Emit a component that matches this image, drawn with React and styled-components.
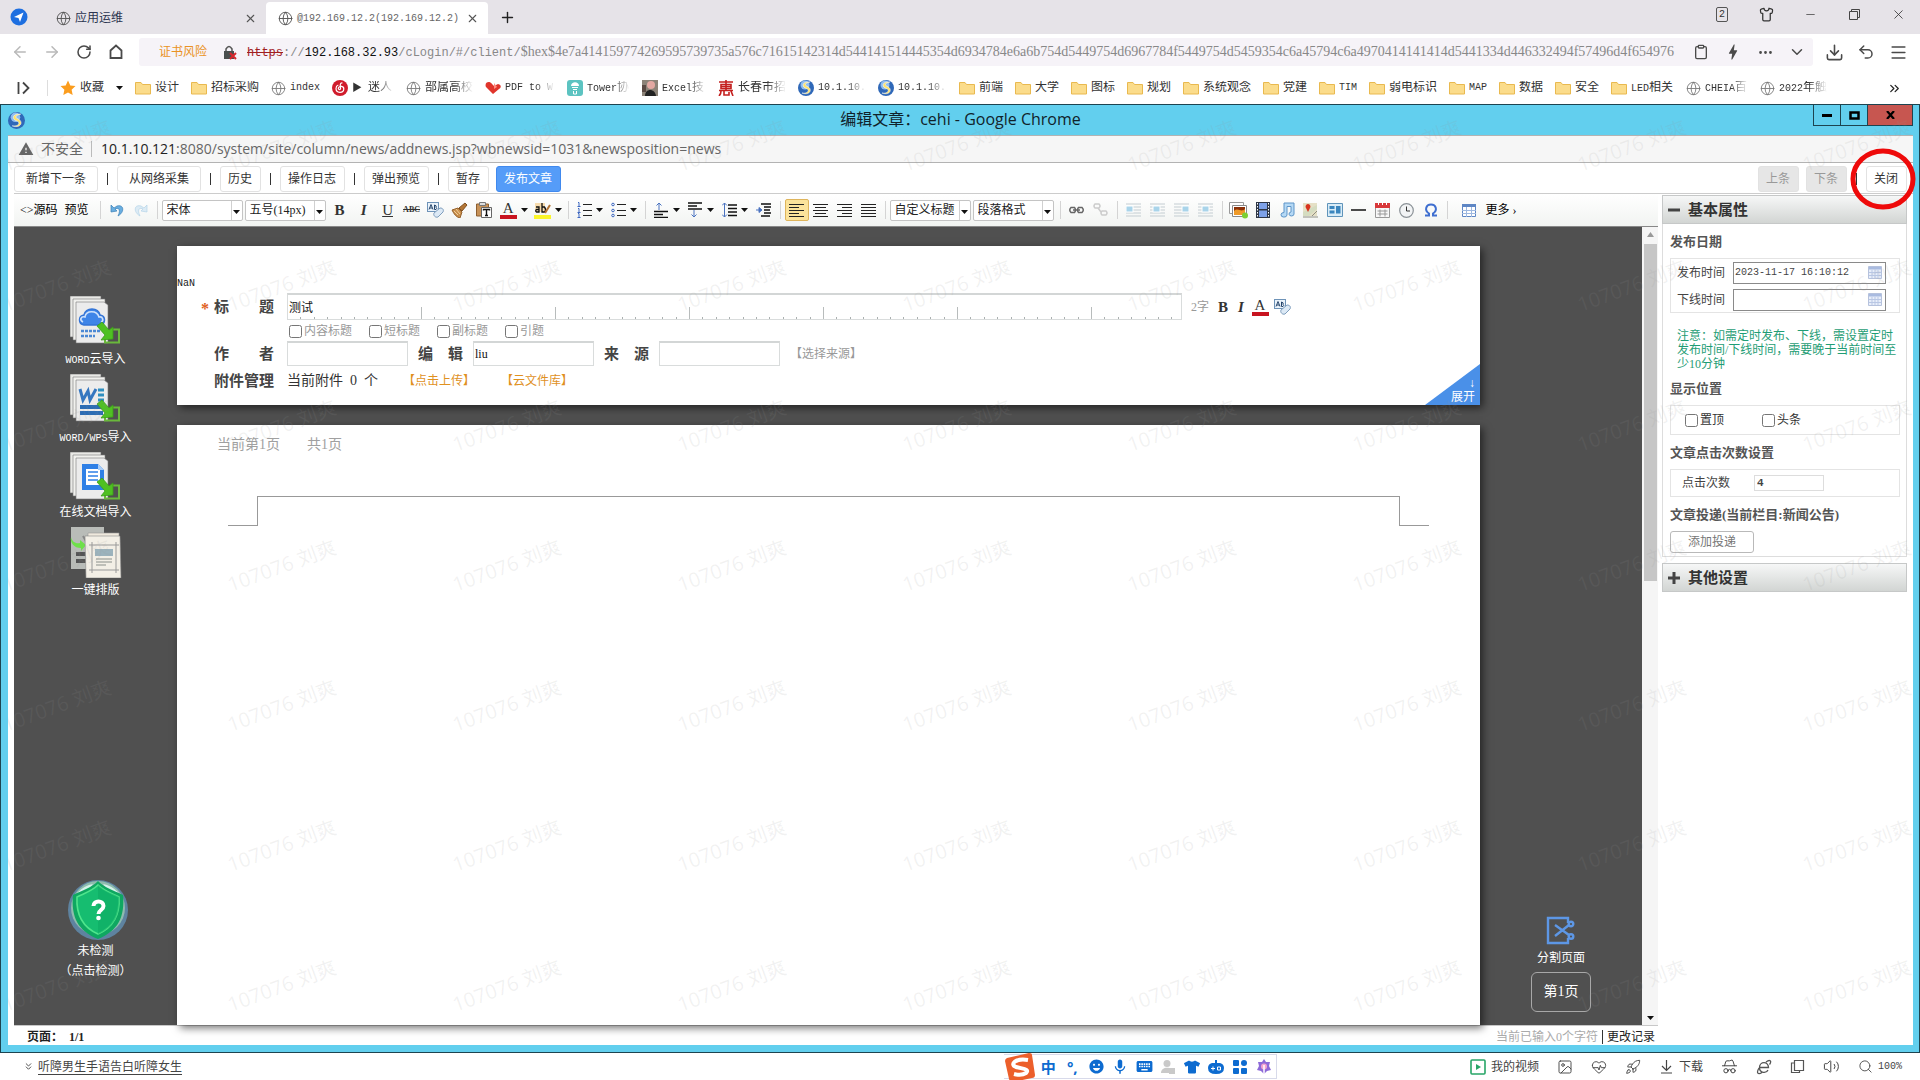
import React, { useState } from 'react';
import styled, { createGlobalStyle, css } from 'styled-components';
import {
  Globe, X, Plus, ArrowLeft, ArrowRight, RotateCw, Shirt, Minus, Copy, Clipboard,
  Ellipsis, ChevronDown, ChevronsDown, ChevronsRight, Undo2, Menu, Download, Image,
  Rocket, HeartPulse, Volume2, Search, HatGlasses,
} from 'lucide-react';
import { MdMic, MdKeyboard, MdBolt, MdWarning, MdEmojiEmotions } from 'react-icons/md';
import { FaTshirt } from 'react-icons/fa';

const song = '"Liberation Serif", "Noto Sans CJK SC", serif';
const mono = '"Liberation Mono", "Noto Sans CJK SC", monospace';
const ui = '"Open Sans", "Noto Sans CJK SC", sans-serif';

const GlobalStyle = createGlobalStyle`
  * {
    box-sizing: border-box;
  }
  body {
    margin: 0;
    background: #ffffff;
    color: #222222;
    font-family: ${song};
    font-size: 12px;
    line-height: 14px;
  }
  button, input, select {
    font-family: inherit;
    font-size: inherit;
    color: inherit;
    line-height: inherit;
    margin: 0;
    padding: 0;
  }
  button {
    background: none;
    border: none;
    cursor: pointer;
    white-space: nowrap;
  }
  a {
    color: inherit;
    text-decoration: none;
  }
  svg {
    display: block;
    flex: none;
  }
`;

const Half = styled.span`
  font-family: ${mono};
  font-size: 10px;
`;

const Page = styled.div`
  display: flex;
  flex-direction: column;
  min-height: 100vh;
  overflow: hidden;
`;

/* ---------- 浏览器外壳 ---------- */

const TabStrip = styled.div`
  display: flex;
  align-items: flex-end;
  height: 34px;
  background: #e6e3e8;
`;

const Compass = styled.div`
  width: 47px;
  padding: 0 0 8px 10px;
`;

const Tab = styled.div`
  display: flex;
  align-items: center;
  gap: 4px;
  width: ${({ $active }) => ($active ? 222 : 219)}px;
  height: 32px;
  padding: 0 9px 0 ${({ $active }) => ($active ? 12 : 9)}px;
  border-radius: 4px 4px 0 0;
  background: ${({ $active }) => ($active ? '#ffffff' : 'transparent')};
  color: #555555;
  span {
    flex: 1;
    white-space: nowrap;
    color: ${({ $active }) => ($active ? '#666666' : '#2c3550')};
  }
`;

const NewTab = styled.button`
  padding: 0 0 8px 11px;
`;

const WinTools = styled.div`
  display: flex;
  margin-left: auto;
  align-self: flex-start;
  height: 28px;
  button {
    display: flex;
    align-items: center;
    justify-content: center;
    width: 44px;
    color: #333333;
  }
`;

const TabCount = styled.span`
  width: 12px;
  height: 15px;
  border: 1px solid #555555;
  border-radius: 2px;
  font-family: ${mono};
  font-size: 10px;
`;

const AddressRow = styled.div`
  display: flex;
  align-items: center;
  height: 36px;
  padding: 0 6px 0 4px;
`;

const NavButton = styled.button`
  display: flex;
  align-items: center;
  justify-content: center;
  width: 32px;
  height: 28px;
  color: ${({ disabled }) => (disabled ? '#b9b9b9' : '#4a4a4a')};
`;

const Omnibox = styled.div`
  display: flex;
  align-items: center;
  flex: 1;
  min-width: 0;
  height: 28px;
  margin: 0 5px 0 7px;
  padding-left: 20px;
  border-radius: 3px;
  background: #f6f3f8;
  color: #888888;
`;

const CertRisk = styled.span`
  width: 64px;
  color: #ea9224;
`;

const Url = styled.div`
  flex: 1;
  min-width: 0;
  overflow: hidden;
  margin-left: 9px;
  font-family: ${mono};
  font-size: 12px;
  line-height: 18px;
  white-space: nowrap;
  s {
    color: #a1201f;
  }
  b {
    font-weight: 400;
    color: #111111;
  }
`;

const UrlHash = styled.span`
  font-family: ${song};
  font-size: 14px;
`;

const Bookmarks = styled.nav`
  display: flex;
  align-items: center;
  gap: 12px;
  height: 34px;
  padding: 2px 18px 0 17px;
`;

const Bookmark = styled.a`
  display: flex;
  align-items: center;
  gap: 4px;
  color: #333333;
  span {
    width: ${({ $w }) => $w}px;
    overflow: hidden;
    white-space: nowrap;
    font-family: ${mono};
    font-size: 10px;
    ${({ $fade }) => $fade && css`
      mask-image: linear-gradient(90deg, #000 60%, transparent);
    `}
  }
  em {
    font-style: normal;
    font-size: 12px;
  }
`;

const BarLine = styled.i`
  width: 1px;
  height: 16px;
  margin: 0 0 0 5px;
  background: #dddddd;
`;

const More = styled.button`
  margin-left: auto;
`;

/* ---------- 远程窗口 ---------- */

const RemoteWindow = styled.section`
  position: relative;
  display: flex;
  flex-direction: column;
  flex: 1;
  border: 1px solid #1d4450;
  background: #62cfee;
  padding: 0 6px 7px 7px;
`;

const TitleBar = styled.header`
  display: grid;
  grid-template-columns: 1fr auto 1fr;
  height: 30px;
  font-family: ${ui};
  font-size: 16px;
  line-height: 28px;
  color: #10222a;
  svg {
    align-self: center;
  }
`;

const WindowButtons = styled.div`
  display: flex;
  justify-self: end;
  height: 21px;
`;

const WindowButton = styled.button`
  display: flex;
  align-items: center;
  justify-content: center;
  width: ${({ $close }) => ($close ? 46 : 28)}px;
  border: 1px solid #1d4450;
  border-top: none;
  margin-left: -1px;
  background: ${({ $close }) => ($close ? '#c75650' : 'transparent')};
`;

const RemoteAddress = styled.div`
  display: flex;
  align-items: center;
  height: 28px;
  padding-left: 10px;
  border-bottom: 1px solid #b3b3b3;
  border-top: 1px solid #b3b3b3;
  background: #f6f6f6;
  font-family: ${ui};
  font-size: 14px;
  line-height: 20px;
  color: #666666;
  span {
    margin-left: 7px;
    padding-right: 8px;
    border-right: 1px solid #bbbbbb;
    line-height: 16px;
  }
  p {
    margin: 0 0 0 9px;
  }
  b {
    font-weight: 400;
    color: #222222;
  }
`;

const Body = styled.div`
  display: flex;
  flex-direction: column;
  flex: 1;
  padding-left: 6px;
  background: #ffffff;
`;

const ActionBar = styled.div`
  display: flex;
  align-items: center;
  gap: 9px;
  height: 31px;
  padding: 2px 6px 0 0;
  border-bottom: 1px solid #cccccc;
`;

const Action = styled.button`
  position: relative;
  height: 26px;
  padding: ${({ $wide }) => ($wide ? '0 11px' : '0 8px 0 7px')};
  margin-left: ${({ $near }) => ($near ? -2 : 0)}px;
  border: 1px solid #e2e2e2;
  border-radius: 3px;
  color: #333333;
  background: #ffffff;
  ${({ $primary }) => $primary && css`
    background: #559cf8;
    border-color: #4089ee;
    color: #ffffff;
  `}
  &:disabled {
    background: #e6e6e6;
    color: #999999;
  }
`;

const Sep = styled.i`
  width: 1px;
  height: 12px;
  background: #333333;
`;

const Spacer = styled.div`
  flex: 1;
`;

const RedRing = styled.svg`
  position: absolute;
  left: -17px;
  top: -19px;
  z-index: 3;
  pointer-events: none;
`;

const Workspace = styled.div`
  display: flex;
  flex: 1;
`;

const Main = styled.div`
  display: flex;
  flex-direction: column;
  flex: 1;
  min-width: 0;
`;

const Toolbar = styled.div`
  display: flex;
  align-items: center;
  height: 32px;
  padding-left: 6px;
  background: linear-gradient(#ffffff, #f2f4f2);
  color: #000000;
`;

const Tool = styled.button`
  display: flex;
  align-items: center;
  justify-content: ${({ $menu }) => ($menu ? 'flex-start' : 'center')};
  gap: 4px;
  width: ${({ $menu, $w }) => $w || ($menu ? 34 : 24)}px;
  height: 22px;
  padding-left: ${({ $menu }) => ($menu ? 4 : 0)}px;
  ${({ $on }) => $on && css`
    background: #fbe39b;
    border: 1px solid #dfb55c;
    border-radius: 2px;
  `}
`;

const TextTool = styled.button`
  margin-right: 7px;
`;

const ToolLine = styled.i`
  width: 1px;
  height: 18px;
  margin: 0 4px;
  background: #d4d4d4;
`;

const Glyph = styled.span`
  font-family: "Liberation Serif", serif;
  font-size: 15px;
  line-height: 16px;
  color: #333333;
  font-weight: ${({ $bold }) => ($bold ? 700 : 400)};
  font-style: ${({ $italic }) => ($italic ? 'italic' : 'normal')};
  text-decoration: ${({ $line }) => $line || 'none'};
  border-bottom: ${({ $bar }) => ($bar ? `4px solid ${$bar}` : 'none')};
  ${({ $small }) => $small && css`
    font-size: 8px;
  `}
  ${({ $bar }) => $bar && css`
    width: 17px;
    line-height: 14px;
    text-align: center;
  `}
`;

const Picker = styled.label`
  position: relative;
  width: 81px;
  margin-right: 2px;
  select {
    appearance: none;
    width: 100%;
    height: 21px;
    padding: 0 13px 0 4px;
    border: 1px solid #c4c4c4;
    border-radius: 2px;
    background: #ffffff;
    color: #222222;
  }
  svg {
    position: absolute;
    right: 3px;
    top: 10px;
  }
  &::after {
    content: '';
    position: absolute;
    right: 11px;
    top: 1px;
    bottom: 1px;
    width: 1px;
    background: #d0d0d0;
  }
`;

/* ---------- 编辑区 ---------- */

const EditorArea = styled.div`
  display: flex;
  flex: 1;
  background: #505050;
  border-top: 1px solid #888888;
`;

const Side = styled.aside`
  display: flex;
  flex-direction: column;
  align-items: center;
  width: ${({ $right }) => ($right ? 162 : 163)}px;
  padding: 69px 0 ${({ $right }) => ($right ? 13 : 44)}px;
  color: #ffffff;
`;

const SideItem = styled.button`
  display: flex;
  flex-direction: column;
  align-items: center;
  height: ${({ $short }) => ($short ? 75 : 78)}px;
  color: #ffffff;
  line-height: ${({ $short }) => ($short ? 24 : 30)}px;
`;

const Check = styled.button`
  display: flex;
  flex-direction: column;
  align-items: center;
  margin-top: auto;
  color: #ffffff;
  line-height: 20px;
`;

const Split = styled.button`
  display: flex;
  flex-direction: column;
  align-items: center;
  margin-top: auto;
  line-height: 27px;
  color: #ffffff;
`;

const PageChip = styled.button`
  width: 60px;
  height: 40px;
  border: 1px solid #a8a8a8;
  border-radius: 6px;
  font-size: 14px;
  color: #ffffff;
`;

const Papers = styled.div`
  display: flex;
  flex-direction: column;
  gap: 20px;
  flex: 1;
  padding-top: 19px;
`;

const Paper = styled.div`
  position: relative;
  flex: ${({ $fill }) => ($fill ? 1 : 'none')};
  background: #ffffff;
  box-shadow: 3px 3px 8px rgba(0, 0, 0, .55);
`;

const NanLine = styled.div`
  padding: 31px 0 1px;
  font-family: ${mono};
  font-size: 10px;
`;

const FormRow = styled.div`
  display: flex;
  align-items: center;
  height: ${({ $h }) => $h}px;
  padding-left: ${({ $indent }) => $indent || 37}px;
`;

const Star = styled.span`
  width: 13px;
  margin-left: -13px;
  color: #e0601c;
  font-size: 16px;
  line-height: 10px;
  font-weight: 700;
  padding-top: 5px;
`;

const FieldLabel = styled.label`
  margin-right: ${({ $tight }) => ($tight ? 10 : 13)}px;
  font-size: 15px;
  font-weight: 700;
  line-height: 20px;
  color: #444444;
  white-space: pre;
`;

const TitleField = styled.div`
  position: relative;
  flex: 1;
  svg {
    position: absolute;
    left: 0;
    bottom: 1px;
  }
`;

const TextField = styled.input`
  width: ${({ $full }) => ($full ? '100%' : '121px')};
  height: ${({ $full }) => ($full ? 27 : 25)}px;
  padding: 0 1px;
  border: 1px solid #d9dcdc;
  border-top: 2px solid #d3d6d6;
  margin-right: ${({ $full }) => ($full ? 0 : 10)}px;
  display: block;
  color: #111111;
`;

const TitleTools = styled.div`
  display: flex;
  align-items: center;
  flex: 0 0 298px;
  padding-left: 9px;
  color: #999999;
  i {
    width: 4px;
  }
`;

const Tick = styled.label`
  display: flex;
  align-items: center;
  gap: 2px;
  margin-right: ${({ $gap }) => $gap || 17}px;
  color: ${({ $muted }) => ($muted ? '#999999' : '#333333')};
  input {
    width: 13px;
    height: 13px;
  }
`;

const Attach = styled.span`
  width: 116px;
  font-size: 14px;
  line-height: 20px;
  color: #333333;
`;

const Link = styled.a`
  width: 98px;
  color: ${({ $muted }) => ($muted ? '#999999' : '#e0911f')};
`;

const Fold = styled.button`
  position: absolute;
  right: 0;
  bottom: 0;
  width: 55px;
  height: 41px;
  padding: 11px 5px 0 0;
  background: #4a90e8;
  clip-path: polygon(100% 0, 100% 100%, 0 100%);
  color: #ffffff;
  text-align: right;
  line-height: 14px;
  span {
    display: block;
  }
`;

const PageInfo = styled.div`
  display: flex;
  gap: 27px;
  height: 71px;
  padding: 10px 40px;
  font-size: 14px;
  line-height: 20px;
  color: #a0a0a0;
`;

const Margins = styled.div`
  display: grid;
  grid-template-columns: 30px 1fr 30px;
  height: 30px;
  padding: 0 51px;
  i {
    border: 0 solid #999999;
  }
  i:nth-child(1) {
    border-width: 0 1px 1px 0;
  }
  i:nth-child(2) {
    border-width: 1px 0 0;
  }
  i:nth-child(3) {
    border-width: 0 0 1px 1px;
  }
`;

const ScrollBar = styled.div`
  display: flex;
  flex-direction: column;
  align-items: center;
  width: 16px;
  padding: 5px 0;
  background: #f5f5f5;
`;

const Thumb = styled.i`
  width: 13px;
  height: 337px;
  margin: 7px 0 auto;
  background: #c6c6c6;
`;

const StatusLine = styled.footer`
  display: flex;
  align-items: center;
  height: 20px;
  padding: 3px 3px 0 13px;
  border-top: 1px solid #c8c8c8;
  b {
    flex: 1;
    white-space: pre;
  }
  span {
    color: #aaaaaa;
    padding-right: 4px;
    margin-right: 4px;
    border-right: 1px solid #333333;
  }
`;

/* ---------- 右侧属性面板 ---------- */

const Panel = styled.aside`
  width: 245px;
  margin: 1px 6px 0 4px;
  color: #444444;
`;

const PanelHead = styled.button`
  display: flex;
  align-items: center;
  gap: 8px;
  width: 100%;
  height: 29px;
  padding-left: 5px;
  border: 1px solid #c6c8c8;
  background: linear-gradient(#f6f7f7, #d2d5d3);
  font-size: 15px;
  font-weight: 700;
  color: #333333;
`;

const PanelBody = styled.div`
  padding: 0 6px 3px 7px;
  margin-bottom: 6px;
  border: 1px solid #dddddd;
  border-top: none;
`;

const Heading = styled.h3`
  margin: 0;
  padding-top: 9px;
  font-size: 13px;
  font-weight: 700;
  line-height: 17px;
  height: 34px;
  color: #555555;
`;

const Box = styled.div`
  display: flex;
  flex-wrap: wrap;
  align-items: center;
  gap: 5px 8px;
  padding: ${({ $pad }) => $pad};
  border: 1px solid #e4e4e4;
  line-height: 20px;
`;

const DateField = styled.span`
  display: flex;
  align-items: center;
  width: 153px;
  height: 22px;
  padding-right: 2px;
  border: 1px solid #8a8a8a;
  input {
    flex: 1;
    min-width: 0;
    padding-left: 1px;
    border: none;
    font-family: ${mono};
    font-size: 10px;
    background: transparent;
  }
`;

const Note = styled.p`
  margin: 16px 0 0 7px;
  font-size: 12px;
  line-height: 14px;
  color: #1f9d75;
`;

const CountInput = styled.input`
  width: 70px;
  height: 16px;
  margin-left: 16px;
  padding-left: 2px;
  border: 1px solid #dddddd;
  font-family: ${mono};
  font-size: 11px;
  font-weight: 700;
`;

const AddButton = styled.button`
  display: block;
  width: 84px;
  height: 22px;
  border: 1px solid #b9b9b9;
  border-radius: 3px;
  color: #777777;
`;

const Watermarks = styled.div`
  position: absolute;
  inset: 0 6px 7px 7px;
  overflow: hidden;
  pointer-events: none;
  z-index: 2;
`;

const MarkGrid = styled.div`
  display: grid;
  grid-template-columns: repeat(9, 225px);
  grid-auto-rows: 140px;
  margin: -29px 0 0 -64px;
  place-items: center;
  font-family: ${ui};
  font-size: 20px;
  color: rgba(150, 150, 150, .13);
  span {
    transform: rotate(-20deg);
    white-space: nowrap;
  }
`;

/* ---------- 底栏 ---------- */

const BottomBar = styled.footer`
  display: flex;
  align-items: center;
  height: 27px;
  padding-right: 18px;
  color: #444444;
`;

const NewsLink = styled.a`
  display: flex;
  align-items: center;
  gap: 4px;
  flex: 0 0 52.8%;
  padding-left: 23px;
  span {
    text-decoration: underline;
    text-underline-offset: 3px;
  }
`;

const Ime = styled.div`
  display: flex;
  align-items: center;
  height: 25px;
  border: 1px solid #d8daea;
  border-left: none;
  background: #ffffff;
  color: #0d6bd0;
  position: relative;
  z-index: 4;
  button {
    display: flex;
    justify-content: center;
    width: 24px;
    color: inherit;
    font-family: ${ui};
    font-size: 15px;
    font-weight: 700;
  }
`;

const StatusTools = styled.div`
  display: flex;
  align-items: center;
  margin-left: auto;
  gap: 18px;
  button {
    display: flex;
    align-items: center;
    gap: 5px;
    color: #444444;
  }
`;

/* ---------- 图标 ---------- */

const Caret = () => <svg width="7" height="4"><path d="M0 0h7L3.500 4z" fill="#111" /></svg>;

const Folder = () => (
  <svg width="16" height="16" viewBox="0 0 16 16">
    <path d="M.5 2.500h5.500l1.500 2h8v9.500h-15z" fill="#fbdc8b" stroke="#e9b94f" />
  </svg>
);

const Ball = ({ size = 16 }) => (
  <svg width={size} height={size} viewBox="0 0 16 16">
    <circle cx="8" cy="8" r="8" fill="#2f68b8" />
    <circle cx="7" cy="5" r="4.500" fill="#8fbdf0" />
    <path d="M12 2C4 1 3 7 8.500 8.500 12 10 10 14 4 13c8 3 11-4 5.500-6.500C6 5 7 3 12 2z" fill="#ffe36a" stroke="#fff" strokeWidth=".5" />
  </svg>
);

const icons = {
  folder: <Folder />,
  globe: <Globe size={15} strokeWidth={1.4} color="#777" />,
  ball: <Ball />,
  netease: (
    <svg width="16" height="16" viewBox="0 0 16 16">
      <circle cx="8" cy="8" r="8" fill="#d01c2c" />
      <path d="M10.500 3C8 2.500 8 5 8.500 7.500c.6 3-3 2.500-2 .2C7.500 5.500 12 6 11.800 9c-.3 4.500-7.800 4.500-7.800-.5C4 6.500 5 5.500 6.300 5" fill="none" stroke="#fff" strokeWidth="1.200" />
    </svg>
  ),
  heart: (
    <svg width="16" height="16" viewBox="0 0 16 16">
      <path d="M8 14 1 7c-2-4 3-7 6-3l2 2 4-2c4 1 3 4 1 5z" fill="#e0352c" />
      <path d="m9 3 3 4-3 2z" fill="#ff8d80" />
    </svg>
  ),
  tower: (
    <svg width="16" height="16" viewBox="0 0 16 16">
      <rect width="16" height="16" rx="3" fill="#5cc3c1" />
      <path d="M4 6c0-5 8-5 8 0z" fill="#fff" />
      <path d="M5 7.500h6M6 9.500h4M6.500 11v3h3v-3" fill="none" stroke="#fff" />
    </svg>
  ),
  photo: (
    <svg width="16" height="16" viewBox="0 0 16 16">
      <rect width="16" height="16" fill="#8c8378" />
      <circle cx="9" cy="5" r="4" fill="#e3a8a2" />
      <path d="M3 16c0-8 10-8 11 0z" fill="#222" />
      <path d="M0 5h4v7H0z" fill="#5a4a44" />
    </svg>
  ),
  hui: (
    <svg width="16" height="16" viewBox="0 0 16 16" fill="none" stroke="#c4201f" strokeWidth="1.600">
      <path d="M1 2h14M8 0v10M3 4.500h10v4H3zM3 6.500h10M1 10.500h14M3 11c0 3-1 4-2 5M6 11v4h5v-3M13 11l2 5" />
    </svg>
  ),
};

const Eraser = () => (
  <svg width="17" height="16" viewBox="0 0 17 16">
    <rect x=".5" y=".5" width="11" height="9" fill="#eaf3fb" stroke="#6e93b8" />
    <path d="M2 7.500 4 2.500l2 5M3 6h2M7.500 3v4.500h1.500q1.500-1.200 0-2.200 1-1.600-1.500-2.300" stroke="#24446b" fill="none" />
    <path d="m7 11 6-5c3 0 4 2 3 4l-5 5c-3 1-5-2-4-4z" fill="#dce9f5" stroke="#7e9dbc" />
  </svg>
);

const Lines = ({ rows, color = '#222', w = 15 }) => (
  <svg width={w} height="15" viewBox="0 0 15 15">
    {rows.map(([x1, x2], i) => (
      <path key={i} d={`M${x1} ${1.5 + i * 3}h${x2 - x1}`} stroke={color} strokeWidth="1" />
    ))}
  </svg>
);

const NumList = ({ dots }) => (
  <svg width="15" height="16" viewBox="0 0 15 16">
    {[2.5, 8.5, 13.5].map((y) => (
      <g key={y}>
        <path d={`M6 ${y}h9`} stroke="#222" />
        {dots
          ? <circle cx="2" cy={y} r="1.300" fill="none" stroke="#3d67c0" />
          : <path d={`M1 ${y - 2}h1v4M.5 ${y + 2}h3`} stroke="#3d67c0" fill="none" />}
      </g>
    ))}
  </svg>
);

const Space = ({ kind }) => (
  <svg width="15" height="16" viewBox="0 0 15 16" fill="none">
    {kind === 'before' && <path d="M0 9.500h14M0 12.500h9M0 15.500h14" stroke="#111" strokeWidth="1.500" />}
    {kind === 'before' && <path d="M5 8V1M2.500 3.500 5 1l2.500 2.500" stroke="#4a73c0" />}
    {kind === 'after' && <path d="M0 1h14M0 4h9M0 7h14" stroke="#111" strokeWidth="1.500" />}
    {kind === 'after' && <path d="M6 8v7M3.500 12.500 6 15l2.500-2.500" stroke="#4a73c0" />}
    {kind === 'line' && <path d="M6 3h9M6 6.500h9M6 10h9M6 13.500h9" stroke="#111" strokeWidth="1.300" />}
    {kind === 'line' && <path d="M2.500 1v14M0 3.500 2.500 1 5 3.500M0 12.500 2.500 15 5 12.500" stroke="#4a73c0" />}
    {kind === 'indent' && <path d="M5 2h10M8 5h7M8 8h6M8 11h7M5 14h9" stroke="#111" strokeWidth="1.600" />}
    {kind === 'indent' && <path d="M0 8h5M3 5.500 6 8l-3 2.500z" stroke="#4a73c0" fill="#4a73c0" />}
  </svg>
);

const Float = ({ x }) => (
  <svg width="15" height="14" viewBox="0 0 15 14">
    <path d="M0 1h15M0 13h15M0 4h15M0 7h15M0 10h15" stroke="#c4cdd2" />
    <rect x={x} y="3" width="7" height="6" fill="#a9d4ea" stroke="#fff" />
  </svg>
);

const Broom = () => (
  <svg width="17" height="16" viewBox="0 0 17 16">
    <path d="m1 8 6-2 4 4-2 6C5 15 3 12 1 8z" fill="#c98f4c" stroke="#94602a" />
    <path d="m3 9 4 4M5 7l4 5" stroke="#f1d09a" />
    <path d="m8 6 6-5 2 2-5 6z" fill="#b37636" stroke="#80501f" />
  </svg>
);

const Paste = () => (
  <svg width="16" height="16" viewBox="0 0 16 16">
    <path d="M.5 2h12v12H.5z" fill="#c79258" stroke="#8d5f30" />
    <path d="M3.500.5h6v3h-6z" fill="#ddd" stroke="#777" />
    <path d="M5.500 5.500h10v10h-10z" fill="#fff" stroke="#666" />
    <path d="M7.500 8.500V7.500h6v1M10.500 7.500v6M9 13.500h3" stroke="#111" strokeWidth="1.400" fill="none" />
  </svg>
);

const Swoosh = ({ color, flip }) => (
  <svg width="14" height="14" viewBox="0 0 14 14">
    <g transform={flip ? 'translate(14 0) scale(-1 1)' : undefined}>
      <path d="M1 2v7l6-1-2-2c4-2 6 1 3 7 7-4 6-12-1-10L4 5z" fill={color} stroke={flip ? '#b4d4e8' : '#3b7fb6'} strokeWidth=".7" />
    </g>
  </svg>
);

const Chain = ({ broken }) => (
  <svg width="17" height="14" viewBox="0 0 17 14" fill="none" stroke={broken ? '#ccc' : '#666'} strokeWidth="1.500">
    {broken
      ? <path d="M3 1h4q2 2 0 4H3Q1 3 3 1zM10 8h4q2 2 0 4h-4q-2-2 0-4zM6 5l3 4" />
      : <path d="M3 4.500h3.500q2 2.500 0 5H3q-2.500-2.500 0-5zM10.500 4.500H14q2.500 2.500 0 5h-3.500q-2-2.500 0-5zM5 7h7" />}
  </svg>
);

const inserts = [
  <svg key="img" width="20" height="17" viewBox="0 0 20 17">
    <path d="M.5.5h14v11H.5z" fill="#fff" stroke="#999" />
    <path d="M3.500 3.500h14v11h-14z" fill="#fff" stroke="#888" />
    <path d="M5 5h11v8H5z" fill="#8b2f08" />
    <path d="M5 9c4-4 7 2 11-2v6H5z" fill="#ef9a28" />
    <circle cx="16" cy="13.500" r="3" fill="#7ccf32" />
  </svg>,
  <svg key="film" width="14" height="16" viewBox="0 0 14 16">
    <path d="M0 0h14v16H0z" fill="#2d3646" />
    <path d="M3 1h8v6H3zM3 8.500h8V15H3z" fill="#7da1e8" />
    <path d="M1.500 1v14M12.500 1v14" stroke="#fff" strokeDasharray="1.500 1.500" />
  </svg>,
  <svg key="music" width="16" height="16" viewBox="0 0 16 16">
    <path d="M5 1h10v11a2.500 2 0 1 1-3-2V4.500H8V13a3 2.300 0 1 1-3-2.500z" fill="#b5d9f5" stroke="#5c94c8" />
  </svg>,
  <svg key="map" width="15" height="15" viewBox="0 0 15 15">
    <path d="M0 0h14v13H0z" fill="#e5e0c6" />
    <path d="M0 9 14 2v4L6 13H0z" fill="#d5dcc0" />
    <path d="M0 14h15M9 13l5-5" stroke="#8d8d80" />
    <path d="M5 9 2.500 4c0-4 5-4 5 0z" fill="#d8341f" />
  </svg>,
  <svg key="layout" width="16" height="14" viewBox="0 0 16 14">
    <path d="M.5.500h15v13H.5z" fill="#d9ecf7" stroke="#5f94ba" />
    <path d="M2.500 3h5v3h-5zM2.500 7.500h5v3h-5zM9 3h4.500v7.500H9z" fill="#3b86be" />
  </svg>,
  <svg key="hr" width="15" height="2"><path d="M0 1h15" stroke="#111" strokeWidth="1.500" /></svg>,
  <svg key="cal" width="15" height="16" viewBox="0 0 15 16">
    <path d="M.5 2.500h14v13H.5z" fill="#f8f8f8" stroke="#999" />
    <path d="M0 1h15v5H0z" fill="#d8383a" />
    <path d="M2.500 9h10M2.500 12h10M5 7.500v7M10 7.500v7" stroke="#999" />
    <path d="M3.500 0v3M7.500 0v3M11.500 0v3" stroke="#fff" />
  </svg>,
  <svg key="clock" width="15" height="15" viewBox="0 0 15 15">
    <circle cx="7.500" cy="7.500" r="6.800" fill="#f2f4f5" stroke="#8b9297" strokeWidth="1.200" />
    <path d="M7.500 3.500v4.500H11" stroke="#333" fill="none" />
  </svg>,
  <svg key="omega" width="14" height="14" viewBox="0 0 14 14">
    <path d="M1 12.500h4v-2C0 7 2 1.500 7 1.500S14 7 9 10.500v2h4" stroke="#3f6fd0" strokeWidth="2" fill="none" />
  </svg>,
];

const Grid = () => (
  <svg width="14" height="13" viewBox="0 0 14 13">
    <path d="M.5.500h13v12H.5z" fill="#fff" stroke="#5e86c4" />
    <path d="M0 0h14v3H0z" fill="#5e86c4" />
    <path d="M0 6.500h14M0 9.500h14M4.500 3v10M9.500 3v10" stroke="#9db8e0" />
  </svg>
);

const DateIcon = () => (
  <svg width="15" height="14" viewBox="0 0 15 14">
    <path d="M.5.500h13v12H.5z" fill="#e8eefa" stroke="#b6c2dd" />
    <path d="M1 1h12v2.500H1z" fill="#a9bbe0" />
    <path d="M1 6.500h12M1 9.500h12M4 4v8M7 4v8M10 4v8" stroke="#b9c7e4" />
  </svg>
);

const Sheets = ({ kind }) => (
  <svg width="51" height="48" viewBox="0 0 51 48">
    <path d="M0 0h31v41H0z" fill="#e9e9e6" stroke="#666" strokeWidth=".6" />
    <path d="M3 3h32v41H3z" fill="#f1f1ee" stroke="#777" strokeWidth=".6" />
    <path d="M6 6h28l4 3v38H6z" fill="#ececec" stroke="#777" strokeWidth=".6" />
    {kind === 'cloud' && (
      <g>
        <path d="M14 29c-6-1-6-9 0-10 2-8 14-8 16 0 6 1 6 9 0 10z" fill="#3f85e8" stroke="#3474d6" strokeWidth="1.500" />
        <path d="M13 26c-4-2-2-6 2-5 1-7 12-7 14 0 4-1 5 4 2 5" fill="none" stroke="#cfe2fb" strokeWidth="1.600" />
        <path d="M11 35h20M11 40h14" stroke="#4b88d4" strokeWidth="2.500" strokeDasharray="3 1" />
      </g>
    )}
    {kind === 'word' && (
      <g>
        <path d="m10 15 3 11 5-9 2 9 6-11" fill="none" stroke="#3577c0" strokeWidth="3" />
        <path d="M28 16h6M28 21h6M28 26h6" stroke="#2f8fc0" strokeWidth="3" />
        <path d="M10 33h23M10 39h23" stroke="#2b6cb4" strokeWidth="4" />
      </g>
    )}
    {kind === 'doc' && (
      <g>
        <path d="M12 12h16l6 6v20H12z" fill="#2f80e6" />
        <path d="M16 17h14v16H16z" fill="#fff" />
        <path d="M18 20h10M18 24h10M18 28h10" stroke="#2f80e6" strokeWidth="1.500" />
        <path d="m28 12 6 6h-6z" fill="#a9cdf8" />
      </g>
    )}
    <path d="M43 33.500h6V46.500H35V43" fill="none" stroke="#6ab83c" strokeWidth="2" />
    <path d="m27 30 5-4 7 8 4-3v12l-12 1 4-5z" fill="#4fc022" stroke="#3a9d18" strokeWidth=".8" />
  </svg>
);

const Layouts = () => (
  <svg width="52" height="51" viewBox="0 0 52 51">
    <path d="M1 0h33v42H1z" fill="#b9bcb8" />
    <path d="M6 27h11M6 34h11" stroke="#555" strokeWidth="4" />
    <path d="m13 9 4 7 3-7" fill="none" stroke="#888" strokeWidth="2" />
    <path d="M1 10c1 5 5 7 9 6v-3l6 5-5 6v-3C4 21 0 16 1 10z" fill="#6fe04a" />
    <path d="M18 6h31v41H18z" fill="#efe9dd" stroke="#999" strokeWidth=".6" />
    <path d="M15 9h35l1 42H16z" fill="#f3efe6" stroke="#888" strokeWidth=".6" />
    <path d="M19 18h30M19 43h30M22 15v31M46 15v31" stroke="#999" />
    <path d="M25 22h18v7H25z" fill="#9cb3bd" />
    <path d="M26 32h16M26 35h16M26 38h10" stroke="#8a8f8a" />
  </svg>
);

const Shield = () => (
  <svg width="66" height="62" viewBox="-6 0 66 62">
    <circle cx="30" cy="31" r="30" fill="#5e83a0" />
    <circle cx="30" cy="29" r="27" fill="#8fbcae" />
    <path d="M9 14q8-8 16-9-4 7-16 9zM51 14q-8-8-16-9 4 7 16 9z" fill="#d4f2ea" />
    <path d="M30 2c7 7 15 9 25 14 2 22-5 36-25 44C10 52 3 38 5 16 15 11 23 9 30 2z" fill="#0fa761" />
    <path d="M30 6c6 6 13 8 21 12 1 18-5 30-21 37C14 48 8 36 9 18 17 14 24 12 30 6z" fill="#16bd70" stroke="#4fe58c" strokeWidth="1.600" />
    <path d="M30 6c6 6 13 8 21 12 1 18-5 30-21 37z" fill="#0aa860" opacity=".5" />
    <path d="M25.500 27c0-6 10-6 10 0 0 4-5 4-5 8" fill="none" stroke="#fff" strokeWidth="4" />
    <circle cx="30.500" cy="39" r="2.300" fill="#fff" />
  </svg>
);

const SplitIcon = () => (
  <svg width="29" height="29" viewBox="0 0 29 29" fill="none" stroke="#5d97e6" strokeWidth="2.400">
    <path d="M22 7V2H2v25h20v-5" />
    <path d="m9 9 14 10M9 20 23 9" />
    <circle cx="25" cy="8" r="2.300" />
    <circle cx="25" cy="20.500" r="2.300" />
  </svg>
);

const Ruler = () => (
  <svg width="895" height="12">
    {Array.from({ length: 66 }, (_, i) => i + 1).map((i) => (
      <path key={i} d={`M${Math.round(i * 13.4) + 0.5} ${i % 10 ? 10 : 0}V12`} stroke={i % 10 ? '#aab0b0' : '#b8bcbc'} />
    ))}
  </svg>
);

const Sogou = () => (
  <svg width="32" height="30" viewBox="0 0 32 30">
    <path d="M3 6 25 1q3 0 3 2l3 20q0 3-3 3L9 30q-3 0-4-3L1 9q0-2 2-3z" fill="#ec5f2b" />
    <path d="M24 8C12 6 5 12 12 15c7 2 14 2 10 6-3 2-8 2-12 1" fill="none" stroke="#fff" strokeWidth="4" />
  </svg>
);

const bookmarks = [
  ['folder', '设计', 24], ['folder', '招标采购', 48], ['globe', 'index', 30], ['netease', '▶ 迷人', 42, true],
  ['globe', '部属高校', 48, true], ['heart', 'PDF to W', 50, true], ['tower', 'Tower协', 43, true],
  ['photo', 'Excel技', 44, true], ['hui', '长春市招', 48, true], ['ball', '10.1.10.', 48, true],
  ['ball', '10.1.10.', 49, true], ['folder', '前端', 24], ['folder', '大学', 24], ['folder', '图标', 24],
  ['folder', '规划', 24], ['folder', '系统观念', 48], ['folder', '党建', 24], ['folder', 'TIM', 18],
  ['folder', '弱电标识', 48], ['folder', 'MAP', 18], ['folder', '数据', 24], ['folder', '安全', 24],
  ['folder', 'LED相关', 43], ['globe', 'CHEIA百', 43, true], ['globe', '2022年触', 48, true],
];

// 汉字 12px，西文半角 10px
const Mixed = ({ text }) => text.split(/([\u4e00-\u9fff]+)/).filter(Boolean).map((part, i) => (
  /[\u4e00-\u9fff]/.test(part) ? <em key={i}>{part}</em> : part
));

const Select = ({ label, options }) => (
  <Picker>
    <select aria-label={label}>
      {options.map((o) => <option key={o}>{o}</option>)}
    </select>
    <Caret />
  </Picker>
);

function BrowserTop() {
  return (
    <>
      <TabStrip>
        <Compass>
          <svg width="18" height="18" viewBox="0 0 18 18">
            <circle cx="9" cy="9" r="8.500" fill="#1e6fe0" />
            <path d="m4 9 9.500-4.500L10 14 8.500 10z" fill="#fff" />
          </svg>
        </Compass>
        <Tab>
          <Globe size={15} strokeWidth={1.5} />
          <span>应用运维</span>
          <X size={13} />
        </Tab>
        <Tab $active>
          <Globe size={15} strokeWidth={1.5} />
          <span><Half>@192.169.12.2(192.169.12.2)</Half></span>
          <X size={13} />
        </Tab>
        <NewTab aria-label="新标签"><Plus size={17} /></NewTab>
        <WinTools>
          <button><TabCount>2</TabCount></button>
          <button aria-label="皮肤"><Shirt size={15} /></button>
          <button aria-label="最小化"><Minus size={13} strokeWidth={1.3} /></button>
          <button aria-label="还原">
            <svg width="11" height="11" viewBox="0 0 11 11" fill="none" stroke="#444">
              <path d="M.5 2.500h8v8h-8zM2.500 2.500v-2h8v8h-2" />
            </svg>
          </button>
          <button aria-label="关闭浏览器"><X size={15} strokeWidth={1.3} /></button>
        </WinTools>
      </TabStrip>
      <AddressRow>
        <NavButton disabled aria-label="后退"><ArrowLeft size={18} /></NavButton>
        <NavButton disabled aria-label="前进"><ArrowRight size={18} /></NavButton>
        <NavButton aria-label="刷新"><RotateCw size={16} strokeWidth={2.3} /></NavButton>
        <NavButton aria-label="主页">
          <svg width="16" height="16" viewBox="0 0 16 16" fill="none" stroke="#4a4a4a" strokeWidth="1.800">
            <path d="M2.500 6.500 8 1.500l5.500 5V14h-11z" />
          </svg>
        </NavButton>
        <Omnibox>
          <CertRisk>证书风险</CertRisk>
          <svg width="15" height="15" viewBox="0 0 15 15">
            <path d="M3 6V4q3-5 6 0v2" fill="none" stroke="#555" strokeWidth="1.500" />
            <path d="M1 6h10v8H1z" fill="#4a4f4f" />
            <path d="m7 8 6 6M13 8l-6 6" stroke="#d8262c" strokeWidth="2" />
          </svg>
          <Url>
            <s>https</s>://<b>192.168.32.93</b>/cLogin/#/client/
            <UrlHash>$hex$4e7a414159774269595739735a576c71615142314d544141514445354d6934784e6a6b754d5449754d6967784f5449754d5459354c6a45794c6a4970414141414d5441334d446332494f57496d4f654976</UrlHash>
          </Url>
          <NavButton aria-label="复制网址"><Clipboard size={16} /></NavButton>
          <NavButton aria-label="极速模式"><MdBolt size={20} /></NavButton>
          <NavButton aria-label="更多"><Ellipsis size={17} /></NavButton>
          <NavButton aria-label="展开"><ChevronDown size={18} /></NavButton>
        </Omnibox>
        <NavButton aria-label="下载"><Download size={19} /></NavButton>
        <NavButton aria-label="恢复标签"><Undo2 size={18} /></NavButton>
        <NavButton aria-label="菜单"><Menu size={19} /></NavButton>
      </AddressRow>
      <Bookmarks>
        <svg width="13" height="14" viewBox="0 0 13 14" fill="none" stroke="#444" strokeWidth="1.800">
          <path d="M1.500 1v12M6 1.500 11.500 7 6 12.500" />
        </svg>
        <BarLine />
        <Bookmark href="#" $w={24}>
          <svg width="16" height="16" viewBox="0 0 16 16">
            <path d="m8 .5 2.300 5 5.200.6-3.900 3.600 1.100 5.400L8 12.400l-4.700 2.700 1.100-5.400L.5 6.100l5.200-.6z" fill="#fb9d1e" />
          </svg>
          <span><em>收藏</em></span>
        </Bookmark>
        <Caret />
        {bookmarks.map(([icon, text, w, fade], i) => (
          <Bookmark key={i} href="#" $w={w} $fade={fade}>
            {icons[icon]}
            <span><Mixed text={text} /></span>
          </Bookmark>
        ))}
        <More aria-label="更多收藏"><ChevronsRight size={15} /></More>
      </Bookmarks>
    </>
  );
}

function EditToolbar() {
  return (
    <Toolbar>
      <TextTool>&lt;&gt;源码</TextTool>
      <TextTool>预览</TextTool>
      <ToolLine />
      <Tool aria-label="撤销"><Swoosh color="#69aee0" /></Tool>
      <Tool aria-label="重做"><Swoosh color="#dcebf5" flip /></Tool>
      <ToolLine />
      <Select label="字体" options={['宋体', '黑体']} />
      <Select label="字号" options={['五号(14px)', '四号(16px)']} />
      <Tool><Glyph $bold>B</Glyph></Tool>
      <Tool><Glyph $bold $italic>I</Glyph></Tool>
      <Tool><Glyph $line="underline">U</Glyph></Tool>
      <Tool><Glyph $bold $small $line="line-through">ABC</Glyph></Tool>
      <Tool aria-label="清除格式"><Eraser /></Tool>
      <Tool aria-label="格式刷"><Broom /></Tool>
      <Tool aria-label="粘贴文本"><Paste /></Tool>
      <Tool $menu><Glyph $bar="#c81420">A</Glyph><Caret /></Tool>
      <Tool $menu aria-label="背景色">
        <svg width="17" height="18" viewBox="0 0 17 18">
          <path d="M0 14h17v4H0z" fill="#fbf52a" />
          <path d="M1 2h10v9H1z" fill="#f8dcae" />
          <path d="M2 6h3v5H2.500q-1.500-1.500 0-2.500H5M8 2v9h2.500q2-2.500 0-5H8" fill="none" stroke="#111" strokeWidth="1.300" />
          <path d="m11 12 5-8" stroke="#b37333" strokeWidth="2" />
        </svg>
        <Caret />
      </Tool>
      <ToolLine />
      <Tool $menu aria-label="有序列表"><NumList /><Caret /></Tool>
      <Tool $menu aria-label="无序列表"><NumList dots /><Caret /></Tool>
      <ToolLine />
      <Tool $menu aria-label="段前距"><Space kind="before" /><Caret /></Tool>
      <Tool $menu aria-label="段后距"><Space kind="after" /><Caret /></Tool>
      <Tool $menu aria-label="行间距"><Space kind="line" /><Caret /></Tool>
      <Tool aria-label="首行缩进"><Space kind="indent" /></Tool>
      <ToolLine />
      <Tool $on aria-label="左对齐"><Lines rows={[[0, 15], [0, 10], [0, 15], [0, 10], [0, 15]]} /></Tool>
      <Tool aria-label="居中"><Lines rows={[[0, 15], [2, 13], [0, 15], [2, 13], [0, 15]]} /></Tool>
      <Tool aria-label="右对齐"><Lines rows={[[0, 15], [5, 15], [0, 15], [5, 15], [0, 15]]} /></Tool>
      <Tool aria-label="两端对齐"><Lines rows={[[0, 15], [0, 15], [0, 15], [0, 15], [0, 15]]} /></Tool>
      <ToolLine />
      <Select label="自定义标题" options={['自定义标题']} />
      <Select label="段落格式" options={['段落格式']} />
      <ToolLine />
      <Tool aria-label="超链接"><Chain /></Tool>
      <Tool aria-label="取消链接"><Chain broken /></Tool>
      <ToolLine />
      {[0, 3, 8, 4].map((x) => <Tool key={x} aria-label="图文混排"><Float x={x} /></Tool>)}
      <ToolLine />
      {inserts.map((icon) => <Tool key={icon.key} aria-label={icon.key}>{icon}</Tool>)}
      <ToolLine />
      <Tool $w={34} aria-label="表格"><Grid /></Tool>
      <TextTool>更多 ›</TextTool>
    </Toolbar>
  );
}

function ArticleForm() {
  const [title, setTitle] = useState('测试');
  const [editor, setEditor] = useState('liu');

  return (
    <Paper>
      <NanLine>NaN</NanLine>
      <FormRow $h={29}>
        <Star>*</Star>
        <FieldLabel htmlFor="title">标　　题</FieldLabel>
        <TitleField>
          <TextField $full id="title" value={title} onChange={(e) => setTitle(e.target.value)} />
          <Ruler />
        </TitleField>
        <TitleTools>
          {title.length}字
          <i />
          <Tool $w={20}><Glyph $bold>B</Glyph></Tool>
          <Tool $w={16}><Glyph $bold $italic>I</Glyph></Tool>
          <Tool $w={22}><Glyph $bar="#c81420">A</Glyph></Tool>
          <Tool $w={22} aria-label="清除标题格式"><Eraser /></Tool>
        </TitleTools>
      </FormRow>
      <FormRow $h={20} $indent={112}>
        {['内容标题', '短标题', '副标题', '引题'].map((t) => (
          <Tick key={t} $muted><input type="checkbox" />{t}</Tick>
        ))}
      </FormRow>
      <FormRow $h={25}>
        <FieldLabel htmlFor="author">作　　者</FieldLabel>
        <TextField id="author" />
        <FieldLabel $tight htmlFor="editor">编　辑</FieldLabel>
        <TextField id="editor" value={editor} onChange={(e) => setEditor(e.target.value)} />
        <FieldLabel $tight htmlFor="source">来　源</FieldLabel>
        <TextField id="source" />
        <Link href="#" $muted>【选择来源】</Link>
      </FormRow>
      <FormRow $h={30}>
        <FieldLabel as="span">附件管理</FieldLabel>
        <Attach>当前附件&nbsp; 0 &nbsp;个</Attach>
        <Link href="#">【点击上传】</Link>
        <Link href="#">【云文件库】</Link>
      </FormRow>
      <FormRow $h={9} />
      <Fold><span>↓</span>展开</Fold>
    </Paper>
  );
}

function PropertyPanel() {
  const [hits, setHits] = useState('4');
  const [publishAt, setPublishAt] = useState('2023-11-17 16:10:12');

  return (
    <Panel>
      <PanelHead>
        <svg width="12" height="12"><path d="M0 6h12" stroke="#444" strokeWidth="3" /></svg>
        基本属性
      </PanelHead>
      <PanelBody>
        <Heading>发布日期</Heading>
        <Box $pad="3px 6px 1px">
          <label htmlFor="publish">发布时间</label>
          <DateField>
            <input id="publish" value={publishAt} onChange={(e) => setPublishAt(e.target.value)} />
            <DateIcon />
          </DateField>
          <label htmlFor="offline">下线时间</label>
          <DateField>
            <input id="offline" />
            <DateIcon />
          </DateField>
        </Box>
        <Note>注意：如需定时发布、下线，需设置定时发布时间/下线时间，需要晚于当前时间至少10分钟</Note>
        <Heading>显示位置</Heading>
        <Box $pad="4px 14px">
          <Tick $gap={30}><input type="checkbox" />置顶</Tick>
          <Tick><input type="checkbox" />头条</Tick>
        </Box>
        <Heading>文章点击次数设置</Heading>
        <Box $pad="3px 11px">
          <label htmlFor="hits">点击次数</label>
          <CountInput id="hits" value={hits} onChange={(e) => setHits(e.target.value)} />
        </Box>
        <Heading>文章投递(当前栏目:新闻公告)</Heading>
        <AddButton>添加投递</AddButton>
      </PanelBody>
      <PanelHead>
        <svg width="12" height="12"><path d="M0 6h12M6 0v12" stroke="#444" strokeWidth="3" /></svg>
        其他设置
      </PanelHead>
    </Panel>
  );
}

export default function App() {
  return (
    <Page>
      <GlobalStyle />
      <BrowserTop />
      <RemoteWindow>
        <TitleBar>
          <Ball size={17} />
          <span>编辑文章：cehi - Google Chrome</span>
          <WindowButtons>
            <WindowButton aria-label="最小化窗口"><svg width="10" height="3"><path d="M0 0h10v3H0z" /></svg></WindowButton>
            <WindowButton aria-label="最大化窗口">
              <svg width="11" height="9"><path d="M1.500 1.500h8v6h-8z" fill="none" stroke="#000" strokeWidth="2.500" /></svg>
            </WindowButton>
            <WindowButton $close aria-label="关闭窗口">
              <svg width="9" height="8"><path d="m1 0 7 8M8 0 1 8" stroke="#000" strokeWidth="2.200" /></svg>
            </WindowButton>
          </WindowButtons>
        </TitleBar>
        <RemoteAddress>
          <MdWarning size={16} />
          <span>不安全</span>
          <p><b>10.1.10.121</b>:8080/system/site/column/news/addnews.jsp?wbnewsid=1031&amp;newsposition=news</p>
        </RemoteAddress>
        <Body>
          <ActionBar>
            <Action $wide>新增下一条</Action>
            <Sep />
            <Action $wide>从网络采集</Action>
            <Sep />
            <Action>历史</Action>
            <Sep />
            <Action>操作日志</Action>
            <Sep />
            <Action>弹出预览</Action>
            <Sep />
            <Action>暂存</Action>
            <Action $near $primary>发布文章</Action>
            <Spacer />
            <Action disabled>上条</Action>
            <Action $near disabled>下条</Action>
            <Sep />
            <Action>
              关闭
              <RedRing width="66" height="62">
                <ellipse cx="33" cy="31" rx="30" ry="28" fill="none" stroke="#ee0a0a" strokeWidth="5" />
              </RedRing>
            </Action>
          </ActionBar>
          <Workspace>
            <Main>
              <EditToolbar />
              <EditorArea>
                <Side>
                  <SideItem><Sheets kind="cloud" /><span><Half>WORD</Half>云导入</span></SideItem>
                  <SideItem><Sheets kind="word" /><span><Half>WORD/WPS</Half>导入</span></SideItem>
                  <SideItem $short><Sheets kind="doc" />在线文档导入</SideItem>
                  <SideItem $short><Layouts />一键排版</SideItem>
                  <Check>
                    <Shield />
                    <span>未检测</span>
                    <span>（点击检测）</span>
                  </Check>
                </Side>
                <Papers>
                  <ArticleForm />
                  <Paper $fill>
                    <PageInfo>
                      <span>当前第1页</span>
                      <span>共1页</span>
                    </PageInfo>
                    <Margins><i /><i /><i /></Margins>
                  </Paper>
                </Papers>
                <Side $right>
                  <Split><SplitIcon />分割页面</Split>
                  <PageChip>第1页</PageChip>
                </Side>
                <ScrollBar>
                  <svg width="7" height="5"><path d="M0 5h7L3.500 0z" fill="#999" /></svg>
                  <Thumb />
                  <Caret />
                </ScrollBar>
              </EditorArea>
              <StatusLine>
                <b>页面：  1/1</b>
                <span>当前已输入0个字符</span>
                更改记录
              </StatusLine>
            </Main>
            <PropertyPanel />
          </Workspace>
        </Body>
        <Watermarks aria-hidden="true">
          <MarkGrid>
            {Array.from({ length: 63 }, (_, i) => <span key={i}>107076 刘爽</span>)}
          </MarkGrid>
        </Watermarks>
      </RemoteWindow>
      <BottomBar>
        <NewsLink href="#"><ChevronsDown size={11} /><span>听障男生手语告白听障女生</span></NewsLink>
        <Ime>
          <Sogou />
          <button>中</button>
          <button>°,</button>
          <button aria-label="表情"><MdEmojiEmotions size={17} /></button>
          <button aria-label="语音"><MdMic size={18} /></button>
          <button aria-label="键盘"><MdKeyboard size={19} /></button>
          <button aria-label="账号">
            <svg width="14" height="14" viewBox="0 0 14 14" fill="#c9c9c9">
              <circle cx="6" cy="3.500" r="3.500" />
              <path d="M0 13c0-7 12-7 12 0zM8 8h6v6H8z" />
            </svg>
          </button>
          <button aria-label="皮肤盒子"><FaTshirt size={16} /></button>
          <button aria-label="游戏">
            <svg width="16" height="14" viewBox="0 0 16 14">
              <path d="M7 0h2v3h3q4 1 4 5 0 6-8 6T0 8q0-4 4-5h3z" fill="#0d6bd0" />
              <path d="M3 8.500h4M5 6.500v4M9.500 7h3v3h-3z" stroke="#fff" fill="none" />
            </svg>
          </button>
          <button aria-label="工具箱">
            <svg width="14" height="14" viewBox="0 0 14 14" fill="#0d6bd0">
              <rect width="6" height="6" rx="1" />
              <circle cx="11" cy="3" r="3" />
              <rect y="8" width="6" height="6" rx="1" />
              <rect x="8" y="8" width="6" height="6" rx="1" />
            </svg>
          </button>
          <button aria-label="智能助手">
            <svg width="16" height="16" viewBox="0 0 16 16">
              <path d="m8 0 2 3 4 0-1 4 2 4-4 1-3 3-3-3-4-1 2-4-1-4 4 0z" fill="#8d6ad8" />
              <circle cx="8" cy="7.500" r="3" fill="#f3a4cf" />
              <path d="M8 6v9" stroke="#fff" strokeWidth="1.500" />
            </svg>
          </button>
        </Ime>
        <StatusTools>
          <button>
            <svg width="16" height="16" viewBox="0 0 16 16">
              <rect x="1" y="1" width="14" height="14" rx="1" fill="none" stroke="#27a567" strokeWidth="1.600" />
              <path d="m6 5 5 3-5 3z" fill="#27a567" />
            </svg>
            我的视频
          </button>
          <button aria-label="截图"><Image size={16} strokeWidth={1.4} /></button>
          <button aria-label="医生"><HeartPulse size={16} strokeWidth={1.4} /></button>
          <button aria-label="加速"><Rocket size={16} strokeWidth={1.4} /></button>
          <button>
            <svg width="15" height="15" viewBox="0 0 15 15" fill="none" stroke="#444" strokeWidth="1.200">
              <path d="M7.500 1v10M3 7l4.500 4.500L12 7M2 14h11" />
            </svg>
            下载
          </button>
          <button aria-label="无痕"><HatGlasses size={17} strokeWidth={1.4} /></button>
          <button aria-label="内核">
            <svg width="16" height="16" viewBox="0 0 16 16" fill="none" stroke="#555" strokeWidth="1.300">
              <path d="M3.500 8.500h9C12.500 2 3.500 2 3.500 8.500c0 6 7 6 8.500 2.500M10 3c4-3 6-1 3.500 2.500M3 9c-3 5-1 7 3 4.500" />
            </svg>
          </button>
          <button aria-label="多窗口">
            <svg width="15" height="15" viewBox="0 0 15 15" fill="none" stroke="#555" strokeWidth="1.200">
              <path d="M4.500 1.500h9v10h-9zM4.500 4H1.500v9.500h8v-2" />
            </svg>
          </button>
          <button aria-label="声音"><Volume2 size={17} strokeWidth={1.4} /></button>
          <button><Search size={15} strokeWidth={1.4} /><Half>100%</Half></button>
        </StatusTools>
      </BottomBar>
    </Page>
  );
}
